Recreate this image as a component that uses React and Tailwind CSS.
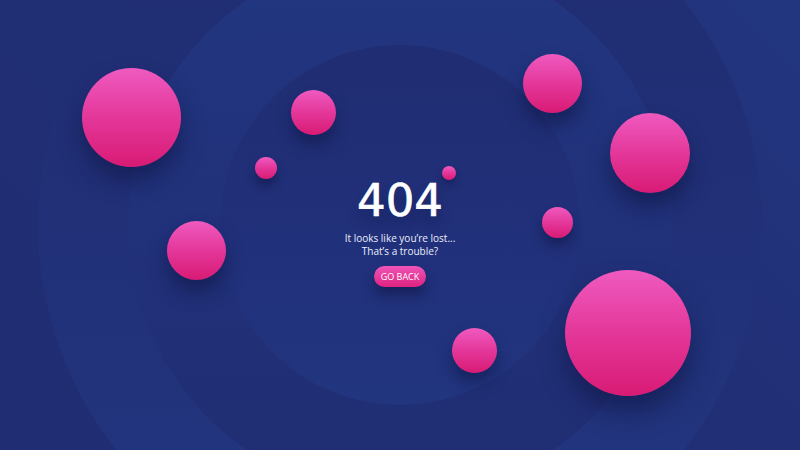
const bubbles = [
  { id: 'a', cls: 'left-[82px] top-[68px] w-[99px] h-[99px] shadow-[0_14px_22px_rgba(14,20,66,0.55)]' },
  { id: 'b', cls: 'left-[291px] top-[90px] w-[45px] h-[45px] shadow-[0_10px_14px_rgba(14,20,66,0.5)]' },
  { id: 'c', cls: 'left-[255px] top-[157px] w-[22px] h-[22px] shadow-[0_7px_9px_rgba(14,20,66,0.5)]' },
  { id: 'd', cls: 'left-[442px] top-[166px] w-[14px] h-[14px] shadow-[0_5px_7px_rgba(14,20,66,0.45)]' },
  { id: 'e', cls: 'left-[523px] top-[54px] w-[59px] h-[59px] shadow-[0_12px_18px_rgba(14,20,66,0.55)]' },
  { id: 'f', cls: 'left-[610px] top-[113px] w-[80px] h-[80px] shadow-[0_14px_20px_rgba(14,20,66,0.55)]' },
  { id: 'g', cls: 'left-[542px] top-[207px] w-[31px] h-[31px] shadow-[0_8px_11px_rgba(14,20,66,0.5)]' },
  { id: 'h', cls: 'left-[167px] top-[221px] w-[59px] h-[59px] shadow-[0_12px_18px_rgba(14,20,66,0.55)]' },
  { id: 'i', cls: 'left-[452px] top-[328px] w-[45px] h-[45px] shadow-[0_10px_14px_rgba(14,20,66,0.5)]' },
  { id: 'j', cls: 'left-[565px] top-[270px] w-[126px] h-[126px] shadow-[0_16px_24px_rgba(14,20,66,0.55)]' },
]

export default function App() {
  return (
    <div className="relative w-[800px] h-[450px] overflow-hidden bg-[linear-gradient(225deg,#223680_0%,#212f76_35%,#202d72_100%)] font-['Open_Sans',sans-serif]">
      {/* background rings */}
      <div className="absolute left-[38px] top-[-137px] w-[724px] h-[724px] rounded-full bg-[linear-gradient(to_bottom,#202d72_0%,#212f76_40%,#223680_100%)]" />
      <div className="absolute left-[128px] top-[-47px] w-[544px] h-[544px] rounded-full bg-[linear-gradient(to_bottom,#223680_0%,#21317a_50%,#202d72_100%)]" />
      <div className="absolute left-[220px] top-[45px] w-[360px] h-[360px] rounded-full bg-[linear-gradient(to_bottom,#202d72_0%,#21307a_55%,#22357f_100%)]" />

      {bubbles.map(b => (
        <div
          key={b.id}
          className={'absolute rounded-full bg-[linear-gradient(to_bottom,#ef5abf_0%,#e4379a_50%,#d81b74_100%)] ' + b.cls}
        />
      ))}

      <div className="relative flex flex-col items-center justify-center h-full pt-[15px]">
        <h1 className="font-['DejaVu_Sans',sans-serif] text-[45px] leading-[44px] text-white [-webkit-text-stroke:0.7px_white] [text-shadow:0_10px_12px_rgba(10,16,60,0.35)]">404</h1>
        <div className="mt-[9px] flex flex-col items-center text-[10px] leading-[13px] text-[#eceefa]">
          <p>It looks like you’re lost...</p>
          <p>That’s a trouble?</p>
        </div>
        <button className="mt-[8px] h-[21px] px-[7px] rounded-full bg-[linear-gradient(to_bottom,#ee56b8,#de2280)] text-white text-[9px] leading-none shadow-[0_8px_12px_rgba(14,20,66,0.55)]">
          GO BACK
        </button>
      </div>
    </div>
  )
}
